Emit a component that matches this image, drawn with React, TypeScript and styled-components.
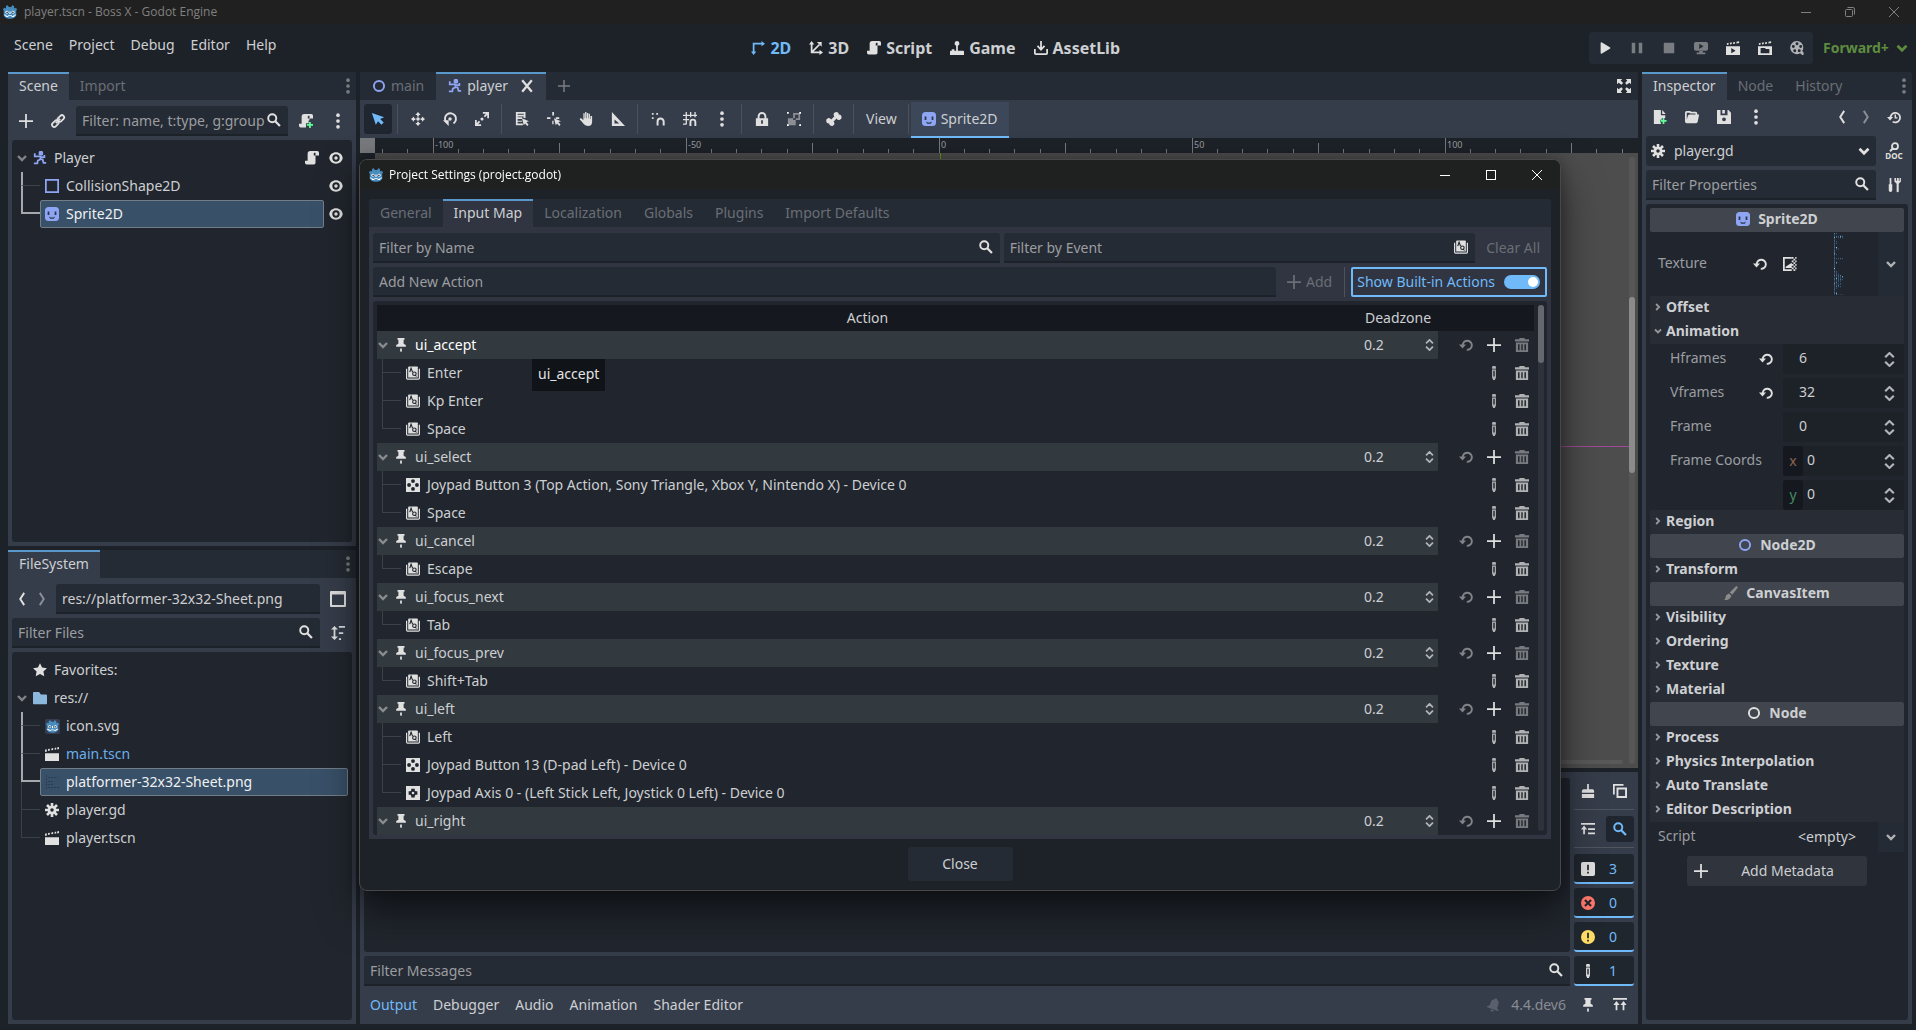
import React from "react";
import styled, { createGlobalStyle, css } from "styled-components";

/* ---------- theme ---------- */
const c = {
  window: "#1d2229",
  bar: "#252b34",
  base: "#363d4a",
  tree: "#21262e",
  text: "#cdcfd2",
  icon: "#e0e0e0",
  dim: "#6a6e76",
  hint: "#9b9da1",
  accent: "#70bafa",
  tabLine: "#5a97cb",
  line: "#3b4149",
  hotLine: "#a5a8ac",
  node: "#8da5f3",
};

const Global = createGlobalStyle`
  * { box-sizing: border-box; }
  body { margin: 0; background: ${c.window}; overflow: hidden; }
  body, button, input, select, table {
    font-family: "Noto Sans", "Open Sans", sans-serif;
    font-size: 14px;
    line-height: 20px;
    color: ${c.text};
  }
  button, input, select { border: 0; margin: 0; padding: 0; background: none; outline: none; }
  ul { list-style: none; margin: 0; padding: 0; }
  svg { display: block; flex: none; }
`;

/* ---------- icons ---------- */
const scriptPath = "M6 0a3 3 0 0 0-3 3v8H0v2.500a2 2 0 0 0 2 2h8a2 2 0 0 0 2-2V5h4V2a2 2 0 0 0-2-2zm5 2h1v3h-2V3a1 1 0 0 1 1-1z";
const clapTicks = "M1 2.6l2-.5v2l-2 .5zM4.6 1.9l2-.4v2l-2 .4zM8.2 1.3l2-.3v2l-2 .3zM12 .8l3-.6v2.2l-3 .4z";
const st = (w = 2, extra: object = {}) => ({ fill: "none", stroke: "currentColor", strokeWidth: w, ...extra });

const icons: Record<string, React.ReactNode> = {
  add: <path d="M7 0v7H0v2h7v7h2V9h7V7H9V0z" />,
  link: (
    <g {...st(2)}>
      <rect x="7" y="2.600" width="8.500" height="5" rx="2.500" transform="rotate(-45 11.200 5)" />
      <rect x=".6" y="8.600" width="8.500" height="5" rx="2.500" transform="rotate(-45 4.800 11)" />
      <path d="M5.500 10.500l5-5" />
    </g>
  ),
  search: (
    <g {...st(2.2)}>
      <circle cx="6" cy="6" r="4.600" />
      <path d="M9.200 9.200l5.600 5.600" strokeWidth="2.600" />
    </g>
  ),
  script: <path d={scriptPath} fillRule="evenodd" />,
  scriptAdd: (
    <>
      <path d="M6 0a3 3 0 0 0-3 3v8H0v2.500a2 2 0 0 0 2 2h6v-5h3V7h1V5h4V2a2 2 0 0 0-2-2zm5 2h1v3h-2V3a1 1 0 0 1 1-1z" fillRule="evenodd" />
      <path fill="#5fff97" d="M11.500 9h2v2.500H16v2h-2.500V16h-2v-2.500H9v-2h2.500z" />
    </>
  ),
  dots: (
    <>
      <circle cx="8" cy="1.300" r="2.100" />
      <circle cx="8" cy="8" r="2.100" />
      <circle cx="8" cy="14.700" r="2.100" />
    </>
  ),
  eye: (
    <path
      fillRule="evenodd"
      d="M8 1.500C4 1.500 1 4 .3 8 1 12 4 14.500 8 14.500s7-2.500 7.700-6.500C15 4 12 1.500 8 1.500zm0 2.300a4.200 4.200 0 1 1 0 8.400 4.200 4.200 0 0 1 0-8.400zM8 6a2 2 0 1 0 0 4 2 2 0 0 0 0-4z"
    />
  ),
  body: (
    <g>
      <path d="M7.500 0h3l1 1v3l-1 1h-3l-1-1V1z" />
      <path {...st(2)} d="M2 2.500v3.500h6M8.500 5v4.500l-3 1.500-.5 3H1M8 9.500h3l1 4h3M9 7h4V4.500" />
    </g>
  ),
  square: <path fillRule="evenodd" d="M0 0v16h16V0zm2 2h12v12H2z" />,
  sprite: (
    <>
      <rect x="0" y="0" width="16" height="16" rx="4" />
      <path fill="#2d3647" d="M3 5h2v4H3zM11 5h2v4h-2zM5 11h1v1h4v-1h1v1l-1 1.500H6L5 12z" />
    </>
  ),
  circle: <circle cx="8" cy="8" r="5.800" {...st(2.200)} />,
  chevDown: <path d="M4 6l4 4 4-4" {...st(2.400)} />,
  chevRight: <path d="M5.500 4l4 4-4 4" {...st(2.400)} />,
  prev: <path d="M10.500 1L6 8l4.500 7" {...st(2.200)} />,
  next: <path d="M5.500 1L10 8l-4.500 7" {...st(2.200)} />,
  file: (
    <>
      <path d="M1 0h8v6h5v3h-4v2H8v3h1v2H1z" />
      <path d="M10.500 0l4 4.500h-4z" />
      <path fill="#5fff97" d="M11 9h2v2.500h2.500v2H13V16h-2v-2.500H8.500v-2H11z" />
    </>
  ),
  folderOpen: <path fillRule="evenodd" d="M2 1a2 2 0 0 0-2 2v10a2 2 0 0 0 2 2h10.500a2 2 0 0 0 2-1.500L16 6V5h-2V4a2 2 0 0 0-2-2H7L6 1zm0 2h3l1 1h6v1H5a2 2 0 0 0-1.700 1.500L2 11z" />,
  save: <path fillRule="evenodd" d="M0 0v16h16V3l-3-3h-1v6H4V0zm6 0v4h3V0zm2 8.500a2.200 2.200 0 1 1 0 4.400 2.200 2.200 0 0 1 0-4.400z" />,
  history: (
    <g {...st(2)}>
      <path d="M4 9a5.500 5.500 0 1 1 2.500 4.300" />
      <path d="M9.500 5v4H12" strokeWidth="1.700" />
      <path fill="currentColor" stroke="none" d="M0 8h7L3.500 12z" />
    </g>
  ),
  gear: (
    <g>
      <path fillRule="evenodd" d="M8 3a5 5 0 1 0 0 10A5 5 0 0 0 8 3zm0 3a2 2 0 1 1 0 4 2 2 0 0 1 0-4z" />
      <path {...st(3)} d="M8 0v4M8 12v4M0 8h4M12 8h4M2.300 2.300l3 3M10.700 10.700l3 3M13.700 2.300l-3 3M5.300 10.700l-3 3" />
    </g>
  ),
  docs: (
    <>
      <circle cx="9" cy="3.200" r="3" {...st(1.800)} />
      <path d="M6.800 5.500L4 8.300" {...st(2)} />
      <text x="8" y="16" fontSize="8" fontWeight="700" textAnchor="middle" fontFamily="Noto Sans, sans-serif">DOC</text>
    </>
  ),
  tools: (
    <g>
      <path d="M3 0h2v7h1v7a2 2 0 0 1-4 0V7h1z" />
      <path d="M8.500 0v4l2.500 2.500V15a1.200 1.200 0 0 0 2.400 0V6.500L15.900 4V0h-1.500v3h-1V0h-2v3h-1V0z" />
    </g>
  ),
  reset: (
    <>
      <path d="M4.300 8a5.200 5.200 0 1 1 4.600 5.500" {...st(2.200)} />
      <path d="M0 7.500h8L4 12z" />
    </>
  ),
  texture: (
    <>
      <path fillRule="evenodd" d="M0 0h10v2H2v12h8v2H0z" />
      <path d="M3 12.500h7V6.500L3 11zM10 0h2v2h-2zM12 2h2v2h-2zM10 4h2v2h-2zM12 6h2v2h-2zM10 8h2v2h-2zM12 10h2v2h-2zM10 12h2v2h-2zM12 14h2v2h-2zM14 0h1.500v2H14zM14 4h1.500v2H14zM14 8h1.500v2H14zM14 12h1.500v2H14z" />
    </>
  ),
  brush: (
    <>
      <path d="M14 0l2 1.500L9.500 10 6.500 7.500z" />
      <path d="M5.500 8.500l3 2.500-1 2c-1.500 2.500-4 3-7.500 3 1.800-1 1.500-3 2.500-5.500z" />
    </>
  ),
  star: <path d="M8 .2l2.400 5 5.500.7-4 3.800 1 5.500L8 12.500l-4.900 2.700 1-5.500-4-3.800 5.500-.7z" />,
  folder: <path d="M1 1h6l2 3h6a1 1 0 0 1 1 1v9a1 1 0 0 1-1 1H1a1 1 0 0 1-1-1V2a1 1 0 0 1 1-1z" />,
  clap: (
    <>
      <path d="M0 7h16v9H0z" />
      <path d="M0 3l2-.4V5.500H0zM3.500 2.300l2-.4v2.200l-2 .4zM7.300 1.600l2-.4v2.200l-2 .4zM11 1l1.800-.4v2.200L11 3.200zM14 .5l2-.4v2.300l-2 .4z" />
    </>
  ),
  playScene: (
    <>
      <path fillRule="evenodd" d="M0 6h16v10H0zm6 2v6l5-3z" />
      <path d={clapTicks} />
    </>
  ),
  playCustom: (
    <>
      <path fillRule="evenodd" d="M0 6h16v10H0zm3 2v6h10V9H9L8 8z" />
      <path d={clapTicks} />
    </>
  ),
  movie: (
    <path
      fillRule="evenodd"
      d="M8 0a7.500 7.500 0 1 0 3.500 14L14 16h1.500v-3L14 11.500A7.500 7.500 0 0 0 8 0zm0 1.500a1.700 1.700 0 1 1 0 3.400 1.700 1.700 0 0 1 0-3.400zM3.800 4.600a1.700 1.700 0 1 1 0 3.400 1.700 1.700 0 0 1 0-3.400zm8.400 0a1.700 1.700 0 1 1 0 3.400 1.700 1.700 0 0 1 0-3.400zM5.400 9.500a1.700 1.700 0 1 1 0 3.400 1.700 1.700 0 0 1 0-3.400zm5.200 0a1.700 1.700 0 1 1 0 3.400 1.700 1.700 0 0 1 0-3.400z"
    />
  ),
  play: <path d="M3 2.500a1 1 0 0 1 1.500-.8l9 5.400a1 1 0 0 1 0 1.800l-9 5.400A1 1 0 0 1 3 13.500z" />,
  pause: <path d="M2 2h4v12H2zM10 2h4v12h-4z" />,
  stop: <rect x="2" y="2" width="12" height="12" rx="1" />,
  remote: (
    <>
      <path fillRule="evenodd" d="M2 1h12a2 2 0 0 1 2 2v6a2 2 0 0 1-2 2H2a2 2 0 0 1-2-2V3a2 2 0 0 1 2-2zm4 2v6l5-3z" />
      <path d="M6 11.500h4V13h3v2H3v-2h3z" />
    </>
  ),
  d2: (
    <g>
      <path {...st(2)} d="M3 13V3h10" />
      <path d="M12 0l4 3-4 3zM0 12h6l-3 4z" />
    </g>
  ),
  d3: (
    <g>
      <path {...st(2)} d="M3 3v10h10M3 13l9-9" />
      <path d="M0 4h6L3 0zM12 10l4 3-4 3zM9 1h5.500v5.500z" />
    </g>
  ),
  game: <path d="M8 0a2.800 2.800 0 0 0-1 5.400V11H5V9.500H2V11H1a1 1 0 0 0-1 1v4h16v-4a1 1 0 0 0-1-1H9V5.400A2.800 2.800 0 0 0 8 0z" />,
  asset: (
    <g {...st(2)}>
      <path d="M8 0v9M1 9v5a1 1 0 0 0 1 1h12a1 1 0 0 0 1-1V9M4 5.500L8 10l4-4.500" />
    </g>
  ),
  select: <path d="M1 1l4.500 13.500L8 10.500l4 4 2.500-2.500-4-4L15 6z" />,
  move: (
    <>
      <path d="M8 0l3 3.500H5zM8 16l3-3.500H5zM0 8l3.500-3v6zM16 8l-3.500-3v6z" />
      <circle cx="8" cy="8" r="2" />
      <path d="M7 3h2v2H7zM7 11h2v2H7zM3 7h2v2H3zM11 7h2v2h-2z" />
    </>
  ),
  rotate: (
    <>
      <path d="M3.500 11.500a6.300 6.300 0 1 1 8.500 1.500" {...st(2.200)} />
      <circle cx="8" cy="8" r="2" />
      <path d="M0 9.500h6.500V16z" />
    </>
  ),
  scale: (
    <>
      <path d="M9 0h7v7h-2V3.500l-2.500 2.500L10 4.500 12.500 2H9zM0 9h2v3.500L4.500 10 6 11.500 3.500 14H7v2H0z" />
      <circle cx="8" cy="8" r="1.800" />
    </>
  ),
  listSelect: (
    <>
      <path fillRule="evenodd" d="M1 0h11v7L8 6v2H3v2h5v1H3v2h6v2H1zm2 2v1h7V2zm0 3v1h7V5z" />
      <path d="M8 7l8 3.500-3 1 2.500 3-1.500 1.500-2.500-3L10 15z" />
    </>
  ),
  pivot: (
    <>
      <path d="M6 0h2v4H6zM0 6h4v2H0zM10 6h4v2h-4zM6 10h1.500v4H6z" />
      <path d="M8 7l8 3.500-3 1 2.500 3-1.500 1.500-2.500-3L10 15z" />
    </>
  ),
  pan: <path d="M7 0h1.500v7H9V1h1.500v6h.5V2h1.500v6h.5V4.500H15V11c0 3-1.500 5-4.500 5S6 14.500 4 12L1 8.500C.5 7.500 2 6.500 3 7.500L5 9.500V1.500h1.500V7H7z" />,
  ruler: <path fillRule="evenodd" d="M1 0v16h15zm3 8.500L9.500 13H4z" />,
  snap: (
    <>
      <path d="M1 1h2v2H1zM6 1h2v2H6zM1 6h2v2H1z" />
      <path d="M7.500 15.500V11a3.500 3.500 0 0 1 7 0v4.500" {...st(2.200)} />
    </>
  ),
  snapGrid: (
    <>
      <path d="M3 0h1.500v14H3zM8 0h1.500v6H8zM13 0h1.500v6H13zM0 3h16v1.500H0zM0 8h7v1.500H0zM0 13h4v1.500H0z" />
      <path d="M8.500 16v-4.500a2.800 2.800 0 0 1 5.600 0V16" {...st(2.200)} />
    </>
  ),
  lock: <path fillRule="evenodd" d="M8 0a5 5 0 0 0-5 5v2H1v9h14V7h-2V5a5 5 0 0 0-5-5zm0 2.200A2.800 2.800 0 0 1 10.800 5v2H5.200V5A2.800 2.800 0 0 1 8 2.200zM7 9.500h2v4H7z" />,
  group: (
    <>
      <path d="M0 0h2v2H0zM14 0h2v2h-2zM0 14h2v2H0zM14 14h2v2h-2z" fill="#fff" />
      <path d="M1 7h6v2h3v6H1zM7 1h8v8h-5V7h3V3H9v4H7z" opacity=".5" />
    </>
  ),
  bone: <path d="M10.500 0a3 3 0 0 0-2.200 5L4.700 8.700A3 3 0 1 0 2.500 13a3 3 0 1 0 5-2.200L11 7.300A3 3 0 1 0 13.500 3a3 3 0 0 0-3-3z" />,
  expand: (
    <path d="M0 0h6L4.200 1.800 7 4.600 5 6.500 1.800 4.200 0 6zM16 0v6l-1.800-1.800L11 6.500 9.300 4.600l2.500-2.800L10 0zM0 16v-6l1.800 1.800L5 9.500 6.700 11.400 4.200 14.200 6 16zM16 16h-6l1.800-1.800L9.300 11.400 11 9.500l3.200 2.300L16 10z" />
  ),
  close: <path d="M2.500 1.500l11 13M13.500 1.500l-11 13" {...st(2.600)} />,
  pin: <path d="M4 0h8v2h-1v4.500L13.500 8v2h-11V8L5 6.500V2H4zM7 12h2v3l-1 1-1-1z" />,
  keys: (
    <>
      <path d="M.7 3v11a1 1 0 0 0 1 1h12.600a1 1 0 0 0 1-1V3" {...st(1.400)} />
      <path d="M2.500 1.500a1 1 0 0 1 1-1h9a1 1 0 0 1 1 1V13h-11z" />
      <path d="M4.300 7L5.800 2.500 7.500 7" fill="none" stroke="#21262e" strokeWidth="1.300" />
      <circle cx="9.600" cy="8.800" r="2" fill="none" stroke="#21262e" strokeWidth="1.300" />
      <path d="M10 10l2 2" fill="none" stroke="#21262e" strokeWidth="1.200" />
    </>
  ),
  joyButton: (
    <path
      fillRule="evenodd"
      d="M0 0h16v16H0zm8 1.300a2.200 2.200 0 1 0 0 4.400 2.200 2.200 0 0 0 0-4.400zM3.500 5.800a2.200 2.200 0 1 0 0 4.400 2.200 2.200 0 0 0 0-4.400zm9 0a2.200 2.200 0 1 0 0 4.400 2.200 2.200 0 0 0 0-4.400zM8 10.300a2.200 2.200 0 1 0 0 4.400 2.200 2.200 0 0 0 0-4.400z"
    />
  ),
  joyAxis: (
    <path fillRule="evenodd" d="M0 0h16v16H0zm6 3v2L5 6H3v4h2l1 1v2h4v-2l1-1h2V6h-2l-1-1V3zm2 3.500a1.500 1.500 0 1 1 0 3 1.500 1.500 0 0 1 0-3z" />
  ),
  pencil: <path fillRule="evenodd" d="M7 0h2a1.200 1.200 0 0 1 1.200 1.200V3H5.800V1.200A1.200 1.200 0 0 1 7 0zM5.800 4h4.400v9L9 16H7l-1.200-3zM7.200 5.500V12h1.600V5.500z" />,
  trash: (
    <path fillRule="evenodd" d="M5 0h6v1.500h5V4H0V1.500h5zM1 5h14v11H1zm2.500 2v7h1.700V7zm3.700 0v7h1.600V7zm3.600 0v7h1.700V7z" />
  ),
  clear: <path d="M7 0h2v6h4a2 2 0 0 1 2 2v2H1V8a2 2 0 0 1 2-2h4zM1 11.500h14V16H1z" />,
  copy: (
    <>
      <path d="M0 0h12v2H2v10H0z" />
      <path fillRule="evenodd" d="M4 4h12v12H4zm2.200 2.200v7.600h7.600V6.200z" />
    </>
  ),
  collapse: <path d="M0 1h16v2H0zM3.500 4L7 8.500H4.500V14h-2V8.500H0zM8 7h8v2H8zM8 12h8v2H8z" />,
  msg: <path fillRule="evenodd" d="M2 0h12a2 2 0 0 1 2 2v12a2 2 0 0 1-2 2H2a2 2 0 0 1-2-2V2a2 2 0 0 1 2-2zm5 3v6.500h2V3zm0 8v2h2v-2z" />,
  error: (
    <>
      <circle cx="8" cy="8" r="8" />
      <path d="M4.500 4.500l7 7M11.500 4.500l-7 7" fill="none" stroke="#20262e" strokeWidth="2.400" />
    </>
  ),
  warn: <path fillRule="evenodd" d="M8 0a8 8 0 1 0 0 16A8 8 0 0 0 8 0zM7 3v6.500h2V3zm0 8v2h2v-2z" />,
  top: <path d="M0 0h16v2H0zM4 3.500L7.500 8H5v6H3V8H.5zM12 3.500L15.500 8H13v6h-2V8H8.500z" />,
  bell: (
    <g transform="rotate(20 8 8)">
      <path d="M8 0a1.500 1.500 0 0 1 1.500 1.500A4.500 4.500 0 0 1 12.500 6v4l2.500 2v1H1v-1l2.500-2V6a4.500 4.500 0 0 1 3-4.500A1.500 1.500 0 0 1 8 0zM6 14h4a2 2 0 0 1-4 0z" />
    </g>
  ),
  split: <path fillRule="evenodd" d="M1 0h14a1 1 0 0 1 1 1v14a1 1 0 0 1-1 1H1a1 1 0 0 1-1-1V1a1 1 0 0 1 1-1zm1 3.500V14h12V3.500z" />,
  sort: <path d="M4 0l4 4H5v8h3l-4 4-4-4h3V4H0zM9 0h7v2H9zM9 7h5v2H9zM9 14h2.500v2H9z" />,
  logo: (
    <>
      <path
        fill="#478cbf"
        d="M5.500.4L3.300 1.200l.2 2-1 .7L1.300 3 0 4.800l.9 1.700V11c0 3 3.600 4.600 7.100 4.600s7.100-1.600 7.100-4.600V6.500L16 4.800 14.700 3l-1.200.9-1-.7.200-2L10.500.4 9.400 2.200H6.600z"
      />
      <g fill="#fff">
        <circle cx="4.500" cy="8.300" r="1.700" />
        <circle cx="11.500" cy="8.300" r="1.700" />
        <path d="M7.400 7.500h1.200v2.700H7.400zM1 10.800l3 .6v1.200h1.800v-1h4.400v1H12v-1.200l3-.6v1l-2.200.6v1.200h-3v-1H6.200v1h-3v-1.200L1 11.800z" />
      </g>
      <circle cx="4.700" cy="8.400" r="1" fill="#414042" />
      <circle cx="11.300" cy="8.400" r="1" fill="#414042" />
    </>
  ),
};

function Icon({ name, color = c.icon, size = 14, dim = 1 }: { name: string; color?: string; size?: number; dim?: number }) {
  return (
    <svg width={size} height={size} viewBox="0 0 16 16" fill="currentColor" style={{ color, opacity: dim, overflow: "visible" }} aria-hidden="true">
      {icons[name]}
    </svg>
  );
}

/* ---------- shared parts ---------- */
const Row = styled.div<{ $gap?: number }>`
  display: flex;
  align-items: center;
  gap: ${(p) => p.$gap ?? 4}px;
`;
const Spacer = styled.div`
  flex: 1;
`;
const IconButton = styled.button<{ $on?: boolean; $w?: number; $h?: number }>`
  display: flex;
  align-items: center;
  justify-content: center;
  flex: none;
  width: ${(p) => p.$w ?? 28}px;
  height: ${(p) => p.$h ?? 30}px;
  border-radius: 3px;
  ${(p) => p.$on && css`background: #202630;`}
`;
const Tool = ({ name, label, ...rest }: any) => {
  const { color, dim, size, ...btn } = rest;
  return (
    <IconButton aria-label={label ?? name} {...btn}>
      <Icon name={name} color={color} dim={dim} size={size} />
    </IconButton>
  );
};
const VLine = styled.span<{ $h?: number }>`
  width: 1px;
  margin: 0 2px 0 1px;
  height: ${(p) => p.$h ?? 30}px;
  background: #4b515d;
  flex: none;
`;
const HLine = styled.span`
  height: 1px;
  margin: 1px 0 2px;
  background: #50555f;
`;
const Field = styled.label<{ $grow?: number }>`
  display: flex;
  align-items: center;
  flex: ${(p) => p.$grow ?? 1} 1 0;
  min-width: 0;
  height: 30px;
  padding: 0 7px 0 6px;
  background: ${c.bar};
  border-bottom: 2px solid #1d2128;
  border-radius: 3px 3px 0 0;
  input {
    flex: 1;
    min-width: 0;
    height: 28px;
  }
  input::placeholder {
    color: ${c.hint};
    opacity: 1;
  }
`;
const Dock = styled.section`
  display: flex;
  flex-direction: column;
  flex: 1 1 0;
  min-height: 0;
  background: ${c.base};
  border-radius: 3px 3px 0 0;
`;
const TabBar = styled.div`
  display: flex;
  align-items: center;
  flex: none;
  height: 28px;
  background: ${c.bar};
  border-radius: 3px 3px 0 0;
`;
const TabButton = styled.button<{ $on?: boolean; $bg?: string; $pad?: number }>`
  display: flex;
  align-items: center;
  gap: 5px;
  height: 28px;
  padding: 0 ${(p) => p.$pad ?? 11}px 2px;
  color: ${(p) => (p.$on ? c.text : c.dim)};
  border-top: 2px solid ${(p) => (p.$on ? c.tabLine : "transparent")};
  background: ${(p) => (p.$on ? p.$bg ?? c.base : "transparent")};
`;
const TabClose = styled.span`
  margin-left: 7px;
`;
const DockBody = styled.div<{ $top?: number }>`
  display: flex;
  flex-direction: column;
  gap: 4px;
  flex: 1;
  min-height: 0;
  padding: ${(p) => p.$top ?? 6}px 4px 4px;
`;
const TreeBox = styled.ul`
  flex: 1;
  min-height: 0;
  padding: 4px;
  overflow: hidden;
  background: ${c.tree};
  border-radius: 3px;
`;
const TreeRow = styled.li`
  display: flex;
  align-items: center;
  height: 28px;
`;
const TreeItem = styled.button<{ $on?: boolean; $color?: string }>`
  display: flex;
  align-items: center;
  gap: 7px;
  flex: 1;
  height: 28px;
  padding: 0 4px;
  text-align: left;
  color: ${(p) => (p.$on ? "#f0f1f2" : p.$color ?? c.text)};
  border: 1px solid ${(p) => (p.$on ? "#727d88" : "transparent")};
  border-radius: 2px;
  background: ${(p) => (p.$on ? "#385068" : "transparent")};
`;
const Fold = styled.span<{ $w: number }>`
  display: flex;
  justify-content: center;
  width: ${(p) => p.$w}px;
  flex: none;
`;
/* tree connector: one cell above the row's middle, one below */
const Branch = styled.span<{ $w: number; $lead: number; $hot?: "pass" | "end"; $last?: boolean }>`
  display: grid;
  grid-template-rows: 1fr 1fr;
  width: ${(p) => p.$w - p.$lead}px;
  height: 28px;
  margin-left: ${(p) => p.$lead}px;
  flex: none;
  &::before {
    content: "";
    border-left: ${(p) => (p.$hot ? `2px solid ${c.hotLine}` : `1px solid ${c.line}`)};
    border-bottom: ${(p) => (p.$hot === "end" ? `2px solid ${c.hotLine}` : `1px solid ${c.line}`)};
  }
  &::after {
    content: "";
    border-left: ${(p) => (p.$last ? "0" : p.$hot === "pass" ? `2px solid ${c.hotLine}` : `1px solid ${c.line}`)};
  }
`;
const Spin = styled.svg.attrs({ viewBox: "0 0 10 14", "aria-hidden": true })<{ $small?: boolean }>`
  width: ${(p) => (p.$small ? 9 : 11)}px;
  height: ${(p) => (p.$small ? 12 : 15)}px;
  fill: none;
  stroke: #b3b5b8;
  stroke-width: 2;
`;
const SpinArrows = ({ small }: { small?: boolean }) => (
  <Spin $small={small}>
    <path d="M1 5l4-4 4 4M1 9l4 4 4-4" />
  </Spin>
);

/* ---------- window frame ---------- */
const Shell = styled.div`
  display: flex;
  flex-direction: column;
  height: 100vh;
  background: ${c.window};
`;
const TitleBar = styled.header<{ $dialog?: boolean }>`
  display: flex;
  align-items: center;
  flex: none;
  gap: ${(p) => (p.$dialog ? 6 : 7)}px;
  height: ${(p) => (p.$dialog ? 30 : 24)}px;
  padding: 0 0 ${(p) => (p.$dialog ? 0 : 1)}px ${(p) => (p.$dialog ? 9 : 3)}px;
  font-family: "Open Sans", "Noto Sans", sans-serif;
  font-size: 12px;
  color: ${(p) => (p.$dialog ? "#fff" : "#808080")};
  background: ${(p) => (p.$dialog ? "#1e2120" : "#202020")};
`;
const WinButtons = styled.div`
  display: flex;
  margin-left: auto;
  svg {
    fill: none;
    stroke: currentColor;
    stroke-width: 1;
  }
  button {
    color: inherit;
  }
`;
const WindowControls = ({ restore }: { restore?: boolean }) => {
  const w = restore ? 44 : 46;
  return (
    <WinButtons>
      <IconButton $w={w} $h={20} aria-label="Minimize">
        <svg width="10" height="10"><path d="M0 5.500h10" /></svg>
      </IconButton>
      <IconButton $w={w} $h={20} aria-label="Maximize">
        {restore ? (
          <svg width="10" height="10"><rect x=".5" y="2.500" width="7" height="7" rx="1" /><path d="M2.500.5H8a1.500 1.500 0 0 1 1.500 1.500v5.500" /></svg>
        ) : (
          <svg width="10" height="10"><rect x=".5" y=".5" width="9" height="9" /></svg>
        )}
      </IconButton>
      <IconButton $w={w} $h={20} aria-label="Close window">
        <svg width="10" height="10"><path d="M0 0l10 10M10 0L0 10" /></svg>
      </IconButton>
    </WinButtons>
  );
};
const MenuBar = styled.nav`
  display: flex;
  justify-content: space-between;
  align-items: center;
  flex: none;
  height: 48px;
  padding: 0 5px 0 8px;
`;
const Menus = styled.div`
  display: flex;
  gap: 4px;
  padding-bottom: 6px;
  button { padding: 2px 6px; }
`;
const Modes = styled.div`
  display: flex;
  gap: 18px;
`;
const ModeButton = styled.button<{ $on?: boolean }>`
  display: flex;
  align-items: center;
  gap: 5px;
  font-size: 16px;
  font-weight: 700;
  color: ${(p) => (p.$on ? c.accent : c.text)};
`;
const RunSide = styled.div`
  display: flex;
  align-items: center;
  gap: 10px;
`;
const RunBar = styled.div`
  display: flex;
  gap: 4px;
  padding: 1px 2px;
  background: ${c.bar};
  border-radius: 3px;
`;
const Renderer = styled.label`
  display: flex;
  align-items: center;
  gap: 4px;
  select {
    appearance: none;
    font-weight: 700;
    color: #5d8c3f;
  }
`;
const Main = styled.main`
  display: flex;
  flex: 1;
  min-height: 0;
  gap: 4px;
  padding: 0 4px 6px 8px;
`;
const Column = styled.div<{ $w?: number }>`
  display: flex;
  flex-direction: column;
  gap: 4px;
  min-width: 0;
  ${(p) => (p.$w ? css`width: ${p.$w}px; flex: none;` : css`flex: 1;`)}
`;

/* ---------- 2D editor ---------- */
const Toolbar = styled.div`
  display: flex;
  align-items: center;
  gap: 4px;
  flex: none;
  height: 38px;
  padding: 0 4px;
`;
const PlainButton = styled.button<{ $dim?: boolean }>`
  display: flex;
  align-items: center;
  gap: 5px;
  height: 30px;
  padding: 0 ${(p) => (p.$dim ? 7 : 6)}px;
  color: ${(p) => (p.$dim ? c.dim : c.text)};
`;
const NodeButton = styled.button`
  display: flex;
  align-items: center;
  align-self: stretch;
  gap: 5px;
  height: 36px;
  margin-top: 2px;
  padding: 0 11px;
  background: #3c4859;
  border-bottom: 2px solid ${c.accent};
`;
const Ruler = styled.div`
  display: flex;
  flex: none;
  height: 15px;
  background: ${c.window};
  &::before {
    content: "";
    width: 15px;
    background: #77797c;
  }
  svg { flex: 1; overflow: hidden; }
  text {
    font-size: 9px;
    fill: #999b9e;
  }
`;
const Canvas = styled.div`
  display: flex;
  flex: 1;
  min-height: 0;
  background: #4d4d4d;
  &::before {
    content: "";
    width: 15px;
    background: ${c.window};
  }
`;
const CanvasArea = styled.div`
  display: flex;
  flex-direction: column;
  flex: 1;
  &::before {
    content: "";
    height: 293px;
    width: 565px;
    border-right: 1px solid #6a9413;
  }
  &::after {
    content: "";
    flex: 1;
    border-top: 1px solid #a14b97;
  }
`;
const ScrollTrack = styled.div<{ $top: number; $thumb: string; $offset: string; $color: string }>`
  display: flex;
  flex: none;
  width: 6px;
  margin: ${(p) => p.$top}px 3px 4px 0;
  padding-top: ${(p) => p.$offset};
  border-radius: 3px;
  background: rgba(255, 255, 255, 0.06);
  &::before {
    content: "";
    width: 6px;
    height: ${(p) => p.$thumb};
    border-radius: 3px;
    background: ${(p) => p.$color};
  }
`;
const HTrack = styled.div`
  height: 4px;
  margin: 0 6px 4px 4px;
  border-radius: 2px;
  background: rgba(255, 255, 255, 0.07);
`;
const CanvasMain = styled.div`
  display: flex;
  flex-direction: column;
  flex: 1;
`;

/* ---------- output panel ---------- */
const Output = styled.section`
  display: flex;
  flex-direction: column;
  flex: none;
  background: ${c.base};
`;
const OutputBody = styled.div`
  display: flex;
  gap: 4px;
  padding: 6px 4px 0;
`;
const OutputMain = styled.div`
  display: flex;
  flex-direction: column;
  flex: 1;
  gap: 4px;
`;
const Log = styled.div`
  flex: 1;
  border-radius: 3px;
  background: ${c.tree};
`;
const OutputTools = styled.div`
  display: flex;
  flex-direction: column;
  gap: 4px;
  width: 60px;
`;
const CountButton = styled.button`
  display: grid;
  grid-template-columns: 28px 1fr;
  align-items: center;
  justify-items: center;
  height: 30px;
  padding: 2px 10px 0 0;
  color: ${c.accent};
  background: #20262e;
  border-bottom: 2px solid ${c.accent};
  border-radius: 3px;
`;
const BottomBar = styled.div`
  display: flex;
  align-items: center;
  gap: 4px;
  height: 38px;
  padding: 0 4px;
`;
const BottomTab = styled.button<{ $on?: boolean }>`
  padding: 0 6px;
  color: ${(p) => (p.$on ? c.accent : c.text)};
`;
const Version = styled.span`
  margin: 0 4px 0 6px;
  color: #888c94;
`;

/* ---------- inspector ---------- */
const SelectBox = styled.label`
  display: flex;
  align-items: center;
  flex: 1;
  gap: 9px;
  height: 30px;
  padding: 0 3px 0 5px;
  background: ${c.bar};
  border-radius: 3px;
  select {
    flex: 1;
    appearance: none;
  }
`;
const PropScroll = styled.div`
  display: flex;
  flex-direction: column;
  flex: 1;
  min-height: 0;
  padding: 4px;
  overflow: hidden;
  border-radius: 3px;
  background: ${c.tree};
`;
const Category = styled.h3`
  display: flex;
  align-items: center;
  justify-content: center;
  gap: 8px;
  flex: none;
  height: 24px;
  margin: 0;
  padding-bottom: 2px;
  font-size: 14px;
  font-weight: 700;
  background: #41454d;
  border-radius: 2px;
`;
const SectionButton = styled.button`
  display: flex;
  align-items: center;
  gap: 2px;
  flex: none;
  height: 24px;
  padding: 0 2px 2px;
  font-weight: 700;
  background: #282c35;
`;
const PropRow = styled.div<{ $indent?: number; $h?: number }>`
  display: flex;
  flex: none;
  align-items: center;
  height: ${(p) => p.$h ?? 30}px;
  padding-left: ${(p) => p.$indent ?? 8}px;
`;
const PropGroup = styled.div`
  display: flex;
  flex-direction: column;
  gap: 4px;
`;
const PropHalf = styled.div<{ $pad?: number }>`
  display: flex;
  align-items: center;
  justify-content: space-between;
  flex: 1;
  padding-right: ${(p) => p.$pad ?? 3}px;
  label, span {
    padding-bottom: 2px;
    color: ${c.hint};
  }
`;
const NumberBox = styled.div<{ $axis?: string }>`
  display: flex;
  align-items: center;
  width: 121px;
  height: 30px;
  padding-right: 9px;
  background: #1d2229;
  border-radius: 3px;
  label {
    width: 20px;
    line-height: 30px;
    text-align: center;
    border-radius: 3px;
    background: #15191f;
    color: ${(p) => p.$axis};
  }
  input {
    flex: 1;
    min-width: 0;
    padding: 0 0 2px ${(p) => (p.$axis ? 4 : 16)}px;
  }
`;
const ResourceMain = styled.button<{ $thumb?: boolean }>`
  display: flex;
  align-items: center;
  justify-content: center;
  width: ${(p) => (p.$thumb ? 74 : 98)}px;
  height: 100%;
  padding-right: 4px;
  color: ${c.text};
`;
const ResourceMore = styled.button`
  display: flex;
  align-items: center;
  justify-content: center;
  width: 26px;
  height: 100%;
  background: ${c.bar};
`;
const MetaButton = styled.button`
  display: grid;
  grid-template-columns: 14px 1fr;
  align-items: center;
  align-self: center;
  flex: none;
  gap: 10px;
  width: 180px;
  height: 30px;
  margin-top: 4px;
  padding: 0 10px 0 7px;
  border-radius: 3px;
  background: #30343d;
`;

/* ---------- project settings dialog ---------- */
const Overlay = styled.div`
  position: fixed;
  inset: 159px 355px 139px 359px;
  display: flex;
`;
const Dialog = styled.div`
  display: flex;
  flex-direction: column;
  flex: 1;
  min-width: 0;
  overflow: hidden;
  border: 1px solid #474847;
  border-radius: 8px;
  background: ${c.window};
  box-shadow: 0 20px 40px rgba(0, 0, 0, 0.55), 0 0 16px rgba(0, 0, 0, 0.3);
`;
const DialogTabs = styled.div`
  display: flex;
  flex-direction: column;
  flex: 1;
  min-height: 0;
  margin: 9px 9px 0;
`;
const DialogPage = styled.div`
  display: flex;
  flex-direction: column;
  gap: 4px;
  flex: 1;
  min-height: 0;
  padding: 6px 4px 4px;
  background: #303541;
`;
const Toggle = styled.label`
  display: flex;
  align-items: center;
  gap: 9px;
  height: 30px;
  padding: 0 5px 0 4px;
  color: ${c.accent};
  border: 2px solid ${c.accent};
  border-radius: 2px;
  input {
    appearance: none;
    display: flex;
    justify-content: flex-end;
    width: 36px;
    height: 14px;
    padding: 2px;
    border-radius: 7px;
    background: ${c.accent};
  }
  input::before {
    content: "";
    width: 10px;
    height: 10px;
    border-radius: 5px;
    background: #fff;
  }
`;
const ActionBox = styled.div`
  display: flex;
  flex: 1;
  min-height: 0;
  gap: 4px;
  padding: 4px 0 0 4px;
  overflow: hidden;
  border-radius: 3px;
  background: ${c.tree};
`;
const ActionTable = styled.table`
  flex: 1;
  width: 100%;
  align-self: flex-start;
  table-layout: fixed;
  border-collapse: collapse;
  td, th { padding: 0; }
  th {
    height: 26px;
    font-weight: 400;
    background: #15191f;
  }
`;
const ActionCell = styled.div`
  position: relative;
  display: flex;
  align-items: center;
  height: 28px;
`;
const ActionTd = styled.td<{ $group?: boolean }>`
  background: ${(p) => (p.$group ? "#32393f" : "transparent")};
`;
const Name = styled.span<{ $gap: number; $hover?: boolean }>`
  margin-left: ${(p) => p.$gap}px;
  color: ${(p) => (p.$hover ? "#fff" : c.text)};
`;
const Deadzone = styled.div`
  display: flex;
  align-items: center;
  height: 28px;
  padding: 0 4px 0 6px;
  input { flex: 1; min-width: 0; }
`;
const RowButtons = styled.div`
  display: flex;
  justify-content: flex-end;
  gap: 14px;
  padding-right: 5px;
`;
const Tooltip = styled.div`
  position: absolute;
  z-index: 1;
  top: 28px;
  left: 155px;
  padding: 5px 6px 7px;
  color: #e2e3e5;
  background: #101317;
`;
const DialogFooter = styled.footer`
  display: flex;
  justify-content: center;
  padding: 8px 0 9px;
`;
const CloseButton = styled.button`
  width: 105px;
  height: 34px;
  border-radius: 3px;
  background: ${c.bar};
`;

/* ---------- data ---------- */
type Ev = { kind: "keys" | "joyButton" | "joyAxis"; name: string };
const k = (name: string): Ev => ({ kind: "keys", name });
const actions: { name: string; events: Ev[]; hover?: boolean }[] = [
  { name: "ui_accept", hover: true, events: [k("Enter"), k("Kp Enter"), k("Space")] },
  { name: "ui_select", events: [{ kind: "joyButton", name: "Joypad Button 3 (Top Action, Sony Triangle, Xbox Y, Nintendo X) - Device 0" }, k("Space")] },
  { name: "ui_cancel", events: [k("Escape")] },
  { name: "ui_focus_next", events: [k("Tab")] },
  { name: "ui_focus_prev", events: [k("Shift+Tab")] },
  {
    name: "ui_left",
    events: [
      k("Left"),
      { kind: "joyButton", name: "Joypad Button 13 (D-pad Left) - Device 0" },
      { kind: "joyAxis", name: "Joypad Axis 0 - (Left Stick Left, Joystick 0 Left) - Device 0" },
    ],
  },
  { name: "ui_right", events: [] },
];
const files = [
  { name: "icon.svg", icon: "logo" },
  { name: "main.tscn", icon: "clap", color: "#6aaeea" },
  { name: "platformer-32x32-Sheet.png", icon: "sheet", on: true },
  { name: "player.gd", icon: "gear" },
  { name: "player.tscn", icon: "clap" },
];

const IconTile = styled.span`
  display: flex;
  padding: 1px;
  margin: 0 -1px 0 0;
  background: #363d52;
  border-radius: 2px;
`;

const sheetRows = [2, 1, 5, 5, 1, 1, 2, 2, 1, 1, 2, 3, 1, 1, 1, 2, 1, 1, 5, 1, 1, 2, 1, 1, 1, 1, 1, 2, 2, 3, 4, 5, 4, 5, 4, 2, 4, 3, 4, 2, 1, 1, 2, 2, 5];
const SheetPreview = () => (
  <svg width="10" height="62" aria-hidden="true">
    {sheetRows.flatMap((n, r) =>
      Array.from({ length: n }, (_, i) => (
        <rect key={`${r}-${i}`} x={i * 2} y={r * 1.4} width="1" height="1" fill={(r * 3 + i) % 11 === 9 ? "#8fd3ee" : (r + i) % 3 ? "#3a6585" : "#4a7fae"} />
      ))
    )}
  </svg>
);
const SheetThumb = () => (
  <svg width="14" height="14" fill="none" stroke="#2b3c50" strokeDasharray="2 1" aria-hidden="true">
    <path d="M1.500 0v14M3 2.500h10M3 6.500h6M3 9.500h5M3 12.500h11" />
  </svg>
);

/* ---------- pieces ---------- */
function SceneDock() {
  return (
    <Dock>
      <TabBar>
        <TabButton $on>Scene</TabButton>
        <TabButton>Import</TabButton>
        <Spacer />
        <Tool name="dots" label="Dock menu" dim={0.45} $w={16} />
      </TabBar>
      <DockBody>
        <Row>
          <Tool name="add" label="Add node" />
          <Tool name="link" label="Instantiate" />
          <Field>
            <input aria-label="Filter nodes" placeholder="Filter: name, t:type, g:group" />
            <Icon name="search" />
          </Field>
          <Tool name="scriptAdd" label="Attach script" />
          <Tool name="dots" label="More" />
        </Row>
        <TreeBox>
          <TreeRow>
            <Fold $w={12}><Icon name="chevDown" dim={0.5} size={16} /></Fold>
            <TreeItem><Icon name="body" color={c.node} />Player</TreeItem>
            <Tool name="script" label="Open script" $h={28} $w={24} />
            <Tool name="eye" label="Toggle visibility" $w={24} />
          </TreeRow>
          <TreeRow>
            <Branch $w={24} $lead={5} $hot="pass" />
            <TreeItem><Icon name="square" color={c.node} />CollisionShape2D</TreeItem>
            <Tool name="eye" label="Toggle visibility" $w={24} />
          </TreeRow>
          <TreeRow>
            <Branch $w={24} $lead={5} $hot="end" $last />
            <TreeItem $on><Icon name="sprite" color={c.node} />Sprite2D</TreeItem>
            <Tool name="eye" label="Toggle visibility" $w={24} />
          </TreeRow>
        </TreeBox>
      </DockBody>
    </Dock>
  );
}

function FileDock() {
  return (
    <Dock>
      <TabBar>
        <TabButton $on>FileSystem</TabButton>
        <Spacer />
        <Tool name="dots" label="Dock menu" dim={0.45} $w={16} />
      </TabBar>
      <DockBody>
        <Row>
          <Row $gap={0}>
            <Tool name="prev" label="Back" $w={20} />
            <Tool name="next" label="Forward" $w={20} dim={0.5} />
          </Row>
          <Field><input aria-label="Path" defaultValue="res://platformer-32x32-Sheet.png" /></Field>
          <Tool name="split" label="Toggle split" size={16} />
        </Row>
        <Row>
          <Field>
            <input aria-label="Filter files" placeholder="Filter Files" />
            <Icon name="search" />
          </Field>
          <Tool name="sort" label="Sort files" />
        </Row>
        <TreeBox>
          <TreeRow>
            <Fold $w={12} />
            <TreeItem><Icon name="star" />Favorites:</TreeItem>
          </TreeRow>
          <TreeRow>
            <Fold $w={12}><Icon name="chevDown" dim={0.5} size={16} /></Fold>
            <TreeItem><Icon name="folder" color="#8cb8de" />res://</TreeItem>
          </TreeRow>
          {files.map((f, i) => (
            <TreeRow key={f.name}>
              <Branch $w={24} $lead={5} $hot={i < 2 ? "pass" : i === 2 ? "end" : undefined} $last={i === files.length - 1} />
              <TreeItem $on={f.on} $color={f.color}>
                {f.icon === "sheet" ? <SheetThumb /> : f.icon === "logo" ? <IconTile><Icon name="logo" size={13} /></IconTile> : <Icon name={f.icon} />}
                {f.name}
              </TreeItem>
            </TreeRow>
          ))}
        </TreeBox>
      </DockBody>
    </Dock>
  );
}

const step = 25.3;
function RulerScale() {
  const zero = 564;
  const ticks = [];
  for (let i = -22; i <= 27; i++) {
    const h = i % 10 === 0 ? 15 : i % 5 === 0 ? 10 : 4;
    ticks.push(<rect key={i} x={Math.floor(zero + i * step)} y={15 - h} width="1" height={h} fill="#77797c" />);
  }
  return (
    <Ruler>
      <svg height="15" width="100%">
        {ticks}
        {[-100, -50, 0, 50, 100].map((v) => (
          <text key={v} x={Math.floor(zero + (v / 5) * step) + 2} y="10">{v}</text>
        ))}
      </svg>
    </Ruler>
  );
}

function Editor() {
  return (
    <Column>
      <Dock>
        <TabBar>
          <TabButton $pad={12}><Icon name="circle" color={c.node} />main</TabButton>
          <TabButton $pad={12} $on>
            <Icon name="body" color={c.node} />player
            <TabClose><Icon name="close" /></TabClose>
          </TabButton>
          <Tool name="add" label="New scene" dim={0.45} size={12} $w={36} />
          <Spacer />
          <Tool name="expand" label="Distraction free mode" />
        </TabBar>
        <Toolbar>
          <Tool name="select" label="Select mode" color={c.accent} $on />
          <VLine />
          <Tool name="move" label="Move mode" />
          <Tool name="rotate" label="Rotate mode" />
          <Tool name="scale" label="Scale mode" />
          <VLine />
          <Tool name="listSelect" label="List nodes" />
          <Tool name="pivot" label="Change pivot" />
          <Tool name="pan" label="Pan mode" />
          <Tool name="ruler" label="Ruler mode" />
          <VLine />
          <Tool name="snap" label="Smart snap" />
          <Tool name="snapGrid" label="Grid snap" />
          <Tool name="dots" label="Snap options" />
          <VLine />
          <Tool name="lock" label="Lock node" />
          <Tool name="group" label="Group nodes" />
          <VLine />
          <Tool name="bone" label="Skeleton options" />
          <VLine />
          <PlainButton>View</PlainButton>
          <Row $gap={0}>
            <VLine />
            <NodeButton><Icon name="sprite" color={c.node} />Sprite2D</NodeButton>
          </Row>
        </Toolbar>
        <RulerScale />
        <Canvas>
          <CanvasMain>
            <CanvasArea />
            <HTrack />
          </CanvasMain>
          <ScrollTrack $top={4} $thumb="176px" $offset="140px" $color="#8b8b8b" />
        </Canvas>
      </Dock>
      <Output>
        <OutputBody>
          <OutputMain>
            <Log />
            <Row>
              <Field>
                <input aria-label="Filter messages" placeholder="Filter Messages" />
                <Icon name="search" />
              </Field>
            </Row>
          </OutputMain>
          <OutputTools>
            <Row>
              <Tool name="clear" label="Clear output" $h={26} />
              <Tool name="copy" label="Copy selection" $h={26} />
            </Row>
            <HLine />
            <Row>
              <Tool name="collapse" label="Collapse duplicates" $h={26} />
              <Tool name="search" label="Show search" $h={26} color={c.accent} $on />
            </Row>
            <HLine />
            <CountButton><Icon name="msg" />3</CountButton>
            <CountButton><Icon name="error" color="#ff786b" />0</CountButton>
            <CountButton><Icon name="warn" color="#ffdd65" />0</CountButton>
            <CountButton><Icon name="pencil" />1</CountButton>
          </OutputTools>
        </OutputBody>
        <BottomBar>
          <BottomTab $on>Output</BottomTab>
          <BottomTab>Debugger</BottomTab>
          <BottomTab>Audio</BottomTab>
          <BottomTab>Animation</BottomTab>
          <BottomTab>Shader Editor</BottomTab>
          <Spacer />
          <Icon name="bell" color="#5a606b" />
          <Version>4.4.dev6</Version>
          <Tool name="pin" label="Pin bottom panel" />
          <Tool name="top" label="Expand bottom panel" />
        </BottomBar>
      </Output>
    </Column>
  );
}

const Section = ({ name, open }: { name: string; open?: boolean }) => (
  <SectionButton><Icon name={open ? "chevDown" : "chevRight"} dim={0.6} size={12} />{name}</SectionButton>
);
function NumberProp({ label, value, reset }: { label: string; value: string; reset?: boolean }) {
  return (
    <PropRow $indent={20}>
      <PropHalf>
        <label htmlFor={label}>{label}</label>
        {reset && <Tool name="reset" label={`Reset ${label}`} />}
      </PropHalf>
      <NumberBox><input id={label} defaultValue={value} /><SpinArrows /></NumberBox>
    </PropRow>
  );
}

function Inspector() {
  return (
    <Column $w={270}>
      <Dock>
        <TabBar>
          <TabButton $on>Inspector</TabButton>
          <TabButton>Node</TabButton>
          <TabButton>History</TabButton>
          <Spacer />
          <Tool name="dots" label="Dock menu" dim={0.45} $w={16} />
        </TabBar>
        <DockBody $top={2}>
          <Row>
            <Tool name="file" label="New resource" />
            <Tool name="folderOpen" label="Load resource" />
            <Tool name="save" label="Save resource" />
            <Tool name="dots" label="More" />
            <Spacer />
            <Tool name="prev" label="Back" $w={20} />
            <Tool name="next" label="Forward" $w={20} dim={0.5} />
            <Tool name="history" label="History" />
          </Row>
          <Row>
            <SelectBox>
              <Icon name="gear" />
              <select aria-label="Edited object"><option>player.gd</option></select>
              <Icon name="chevDown" size={18} />
            </SelectBox>
            <Tool name="docs" label="Open documentation" size={16} />
          </Row>
          <Row>
            <Field>
              <input aria-label="Filter properties" placeholder="Filter Properties" />
              <Icon name="search" />
            </Field>
            <Tool name="tools" label="Property settings" />
          </Row>
          <PropScroll>
            <Category><Icon name="sprite" color={c.node} />Sprite2D</Category>
            <PropRow $h={64}>
              <PropHalf $pad={0}>
                <span>Texture</span>
                <Row $gap={2}>
                  <Tool name="reset" label="Reset texture" />
                  <Tool name="texture" label="Texture" />
                </Row>
              </PropHalf>
              <ResourceMain $thumb aria-label="Texture preview"><SheetPreview /></ResourceMain>
              <ResourceMore aria-label="Texture options"><Icon name="chevDown" dim={0.75} size={16} /></ResourceMore>
            </PropRow>
            <Section name="Offset" />
            <Section name="Animation" open />
            <PropGroup>
              <NumberProp label="Hframes" value="6" reset />
              <NumberProp label="Vframes" value="32" reset />
              <NumberProp label="Frame" value="0" />
              <PropRow $indent={20}>
                <PropHalf><span>Frame Coords</span></PropHalf>
                <NumberBox $axis="#8e6351"><label htmlFor="fx">x</label><input id="fx" defaultValue="0" /><SpinArrows /></NumberBox>
              </PropRow>
              <PropRow $indent={20}>
                <PropHalf />
                <NumberBox $axis="#458a63"><label htmlFor="fy">y</label><input id="fy" defaultValue="0" /><SpinArrows /></NumberBox>
              </PropRow>
            </PropGroup>
            <Section name="Region" />
            <Category><Icon name="circle" color={c.node} />Node2D</Category>
            <Section name="Transform" />
            <Category><Icon name="brush" color="#8b8b8b" />CanvasItem</Category>
            <Section name="Visibility" />
            <Section name="Ordering" />
            <Section name="Texture" />
            <Section name="Material" />
            <Category><Icon name="circle" />Node</Category>
            <Section name="Process" />
            <Section name="Physics Interpolation" />
            <Section name="Auto Translate" />
            <Section name="Editor Description" />
            <PropRow>
              <PropHalf><span>Script</span></PropHalf>
              <ResourceMain>&lt;empty&gt;</ResourceMain>
              <ResourceMore aria-label="Script options"><Icon name="chevDown" dim={0.75} size={16} /></ResourceMore>
            </PropRow>
            <MetaButton><Icon name="add" />Add Metadata</MetaButton>
          </PropScroll>
        </DockBody>
      </Dock>
    </Column>
  );
}

const SmallTool = (p: any) => <Tool $w={14} $h={28} {...p} />;

function ProjectSettings() {
  return (
    <Overlay>
      <Dialog role="dialog" aria-label="Project Settings">
        <TitleBar $dialog>
          <Icon name="logo" />
          Project Settings (project.godot)
          <WindowControls />
        </TitleBar>
        <DialogTabs>
          <TabBar>
            {["General", "Input Map", "Localization", "Globals", "Plugins", "Import Defaults"].map((t, i) => (
              <TabButton key={t} $on={i === 1} $bg="#303541">{t}</TabButton>
            ))}
          </TabBar>
          <DialogPage>
            <Row>
              <Field $grow={629}>
                <input aria-label="Filter by name" placeholder="Filter by Name" />
                <Icon name="search" />
              </Field>
              <Field $grow={470}>
                <input aria-label="Filter by event" placeholder="Filter by Event" />
                <Icon name="keys" />
              </Field>
              <PlainButton $dim>Clear All</PlainButton>
            </Row>
            <Row>
              <Field><input aria-label="Add new action" placeholder="Add New Action" /></Field>
              <PlainButton $dim><Icon name="add" color={c.dim} />Add</PlainButton>
              <VLine />
              <Toggle>Show Built-in Actions<input type="checkbox" defaultChecked /></Toggle>
            </Row>
            <ActionBox>
              <ActionTable>
                <colgroup>
                  <col />
                  <col width="80" />
                  <col width="96" />
                </colgroup>
                <thead>
                  <tr><th>Action</th><th>Deadzone</th><th aria-label="Buttons" /></tr>
                </thead>
                <tbody>
                  {actions.map((a) => (
                    <React.Fragment key={a.name}>
                      <tr>
                        <ActionTd $group>
                          <ActionCell>
                            <Fold $w={12}><Icon name="chevDown" dim={0.5} size={16} /></Fold>
                            <Name $gap={5}><Icon name="pin" /></Name>
                            <Name $gap={7} $hover={a.hover}>{a.name}</Name>
                            {a.hover && <Tooltip role="tooltip">{a.name}</Tooltip>}
                          </ActionCell>
                        </ActionTd>
                        <ActionTd $group>
                          <Deadzone><input aria-label={`${a.name} deadzone`} defaultValue="0.2" /><SpinArrows small /></Deadzone>
                        </ActionTd>
                        <ActionTd>
                          <RowButtons>
                            <SmallTool name="reset" label="Revert" dim={0.5} />
                            <SmallTool name="add" label="Add event" />
                            <SmallTool name="trash" label="Remove action" dim={0.45} />
                          </RowButtons>
                        </ActionTd>
                      </tr>
                      {a.events.map((e, i) => (
                        <tr key={e.name}>
                          <ActionTd>
                            <ActionCell>
                              <Branch $w={24} $lead={5} $last={i === a.events.length - 1} />
                              <Name $gap={5}><Icon name={e.kind} /></Name>
                              <Name $gap={7}>{e.name}</Name>
                            </ActionCell>
                          </ActionTd>
                          <ActionTd />
                          <ActionTd>
                            <RowButtons>
                              <SmallTool name="pencil" label="Edit event" dim={0.75} />
                              <SmallTool name="trash" label="Remove event" dim={0.75} />
                            </RowButtons>
                          </ActionTd>
                        </tr>
                      ))}
                    </React.Fragment>
                  ))}
                </tbody>
              </ActionTable>
              <ScrollTrack $top={0} $thumb="58px" $offset="0px" $color="#64686e" />
            </ActionBox>
          </DialogPage>
        </DialogTabs>
        <DialogFooter><CloseButton>Close</CloseButton></DialogFooter>
      </Dialog>
    </Overlay>
  );
}

export default function App() {
  return (
    <Shell>
      <Global />
      <TitleBar>
        <Icon name="logo" />
        player.tscn - Boss X - Godot Engine
        <WindowControls restore />
      </TitleBar>
      <MenuBar>
        <Menus>
          {["Scene", "Project", "Debug", "Editor", "Help"].map((m) => <button key={m}>{m}</button>)}
        </Menus>
        <Modes>
          <ModeButton $on><Icon name="d2" color={c.accent} />2D</ModeButton>
          <ModeButton><Icon name="d3" />3D</ModeButton>
          <ModeButton><Icon name="script" />Script</ModeButton>
          <ModeButton><Icon name="game" />Game</ModeButton>
          <ModeButton><Icon name="asset" />AssetLib</ModeButton>
        </Modes>
        <RunSide>
          <RunBar>
            <Tool name="play" label="Run project" />
            <Tool name="pause" label="Pause" dim={0.45} />
            <Tool name="stop" label="Stop" dim={0.45} />
            <Tool name="remote" label="Remote debug" dim={0.45} />
            <Tool name="playScene" label="Run current scene" />
            <Tool name="playCustom" label="Run specific scene" />
            <Tool name="movie" label="Movie maker mode" dim={0.75} />
          </RunBar>
          <Renderer>
            <select aria-label="Renderer"><option>Forward+</option></select>
            <Icon name="chevDown" color="#5d8c3f" size={18} />
          </Renderer>
        </RunSide>
      </MenuBar>
      <Main>
        <Column $w={348}>
          <SceneDock />
          <FileDock />
        </Column>
        <Editor />
        <Inspector />
      </Main>
      <ProjectSettings />
    </Shell>
  );
}
